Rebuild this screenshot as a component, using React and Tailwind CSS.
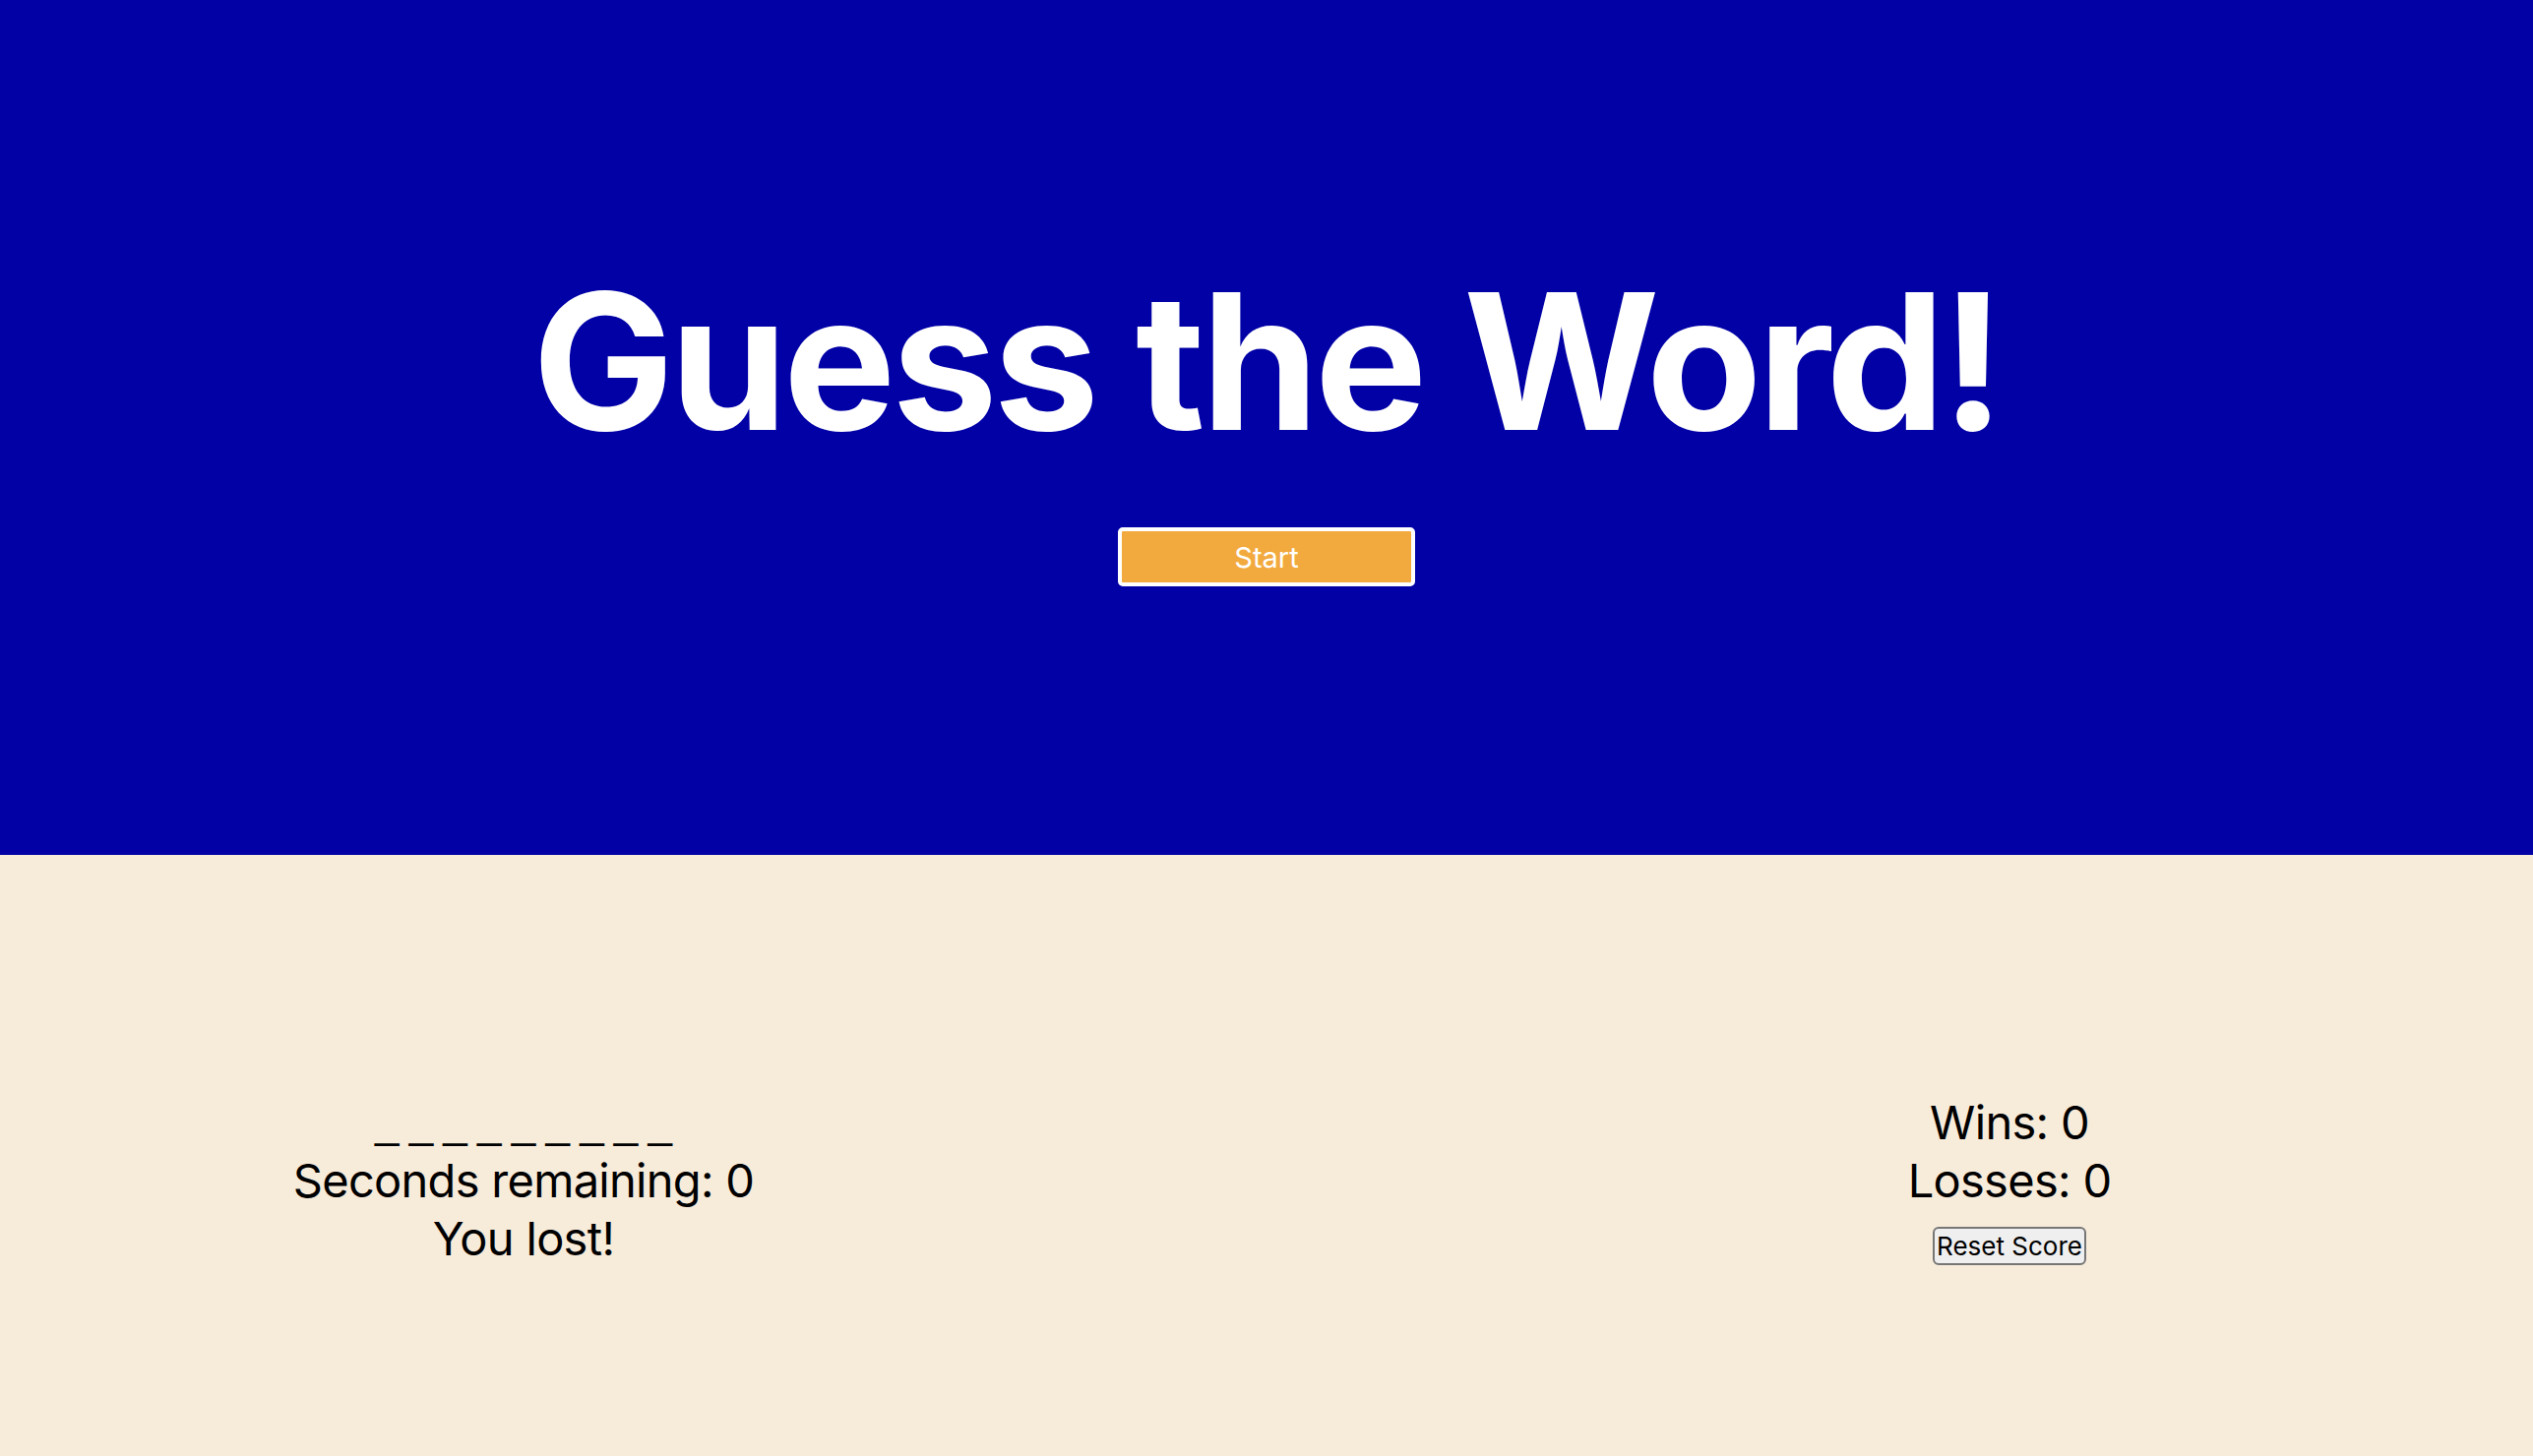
import React, { useState } from "react";

const App = () => {
  const [wins, setWins] = useState(0);
  const [losses, setLosses] = useState(0);
  const blanks = "_ _ _ _ _ _ _ _ _";

  return (
    <div className="min-h-screen flex flex-col font-['Inter',_'Noto_Sans',_sans-serif] text-black">
      {/* Header */}
      <header className="h-[869px] bg-[#0101a6] flex flex-col items-center pt-[252px]">
        <h1 className="text-[192px] font-bold text-white leading-[1.2] tracking-[-0.022em]">
          Guess the Word!
        </h1>
        <button className="mt-[54px] w-[302px] h-[60px] bg-[#f2aa3e] border-[4px] border-white rounded-[5px] text-white text-[29px] leading-none">
          Start
        </button>
      </header>

      {/* Game area */}
      <main className="flex-1 h-[611px] bg-[#f7ebda] flex justify-between items-start px-[232px] pt-[242px]">
        <div className="w-[600px] flex flex-col items-center text-[47px] leading-[59px] tracking-[-0.015em]">
          <p className="font-['Liberation_Sans',_sans-serif] text-[44px] tracking-normal [word-spacing:-2px]">{blanks}</p>
          <p>Seconds remaining: 0</p>
          <p>You lost!</p>
        </div>

        <div className="w-[600px] flex flex-col items-center text-[47px] leading-[59px] tracking-[-0.015em]">
          <p>Wins: {wins}</p>
          <p>Losses: {losses}</p>
          <button
            onClick={() => {
              setWins(0);
              setLosses(0);
            }}
            className="mt-[18px] w-[156px] h-[39px] bg-[#efefef] border-2 border-[#767676] rounded-[6px] text-[26px] leading-none tracking-normal"
          >
            Reset Score
          </button>
        </div>
      </main>
    </div>
  );
};

export default App;
